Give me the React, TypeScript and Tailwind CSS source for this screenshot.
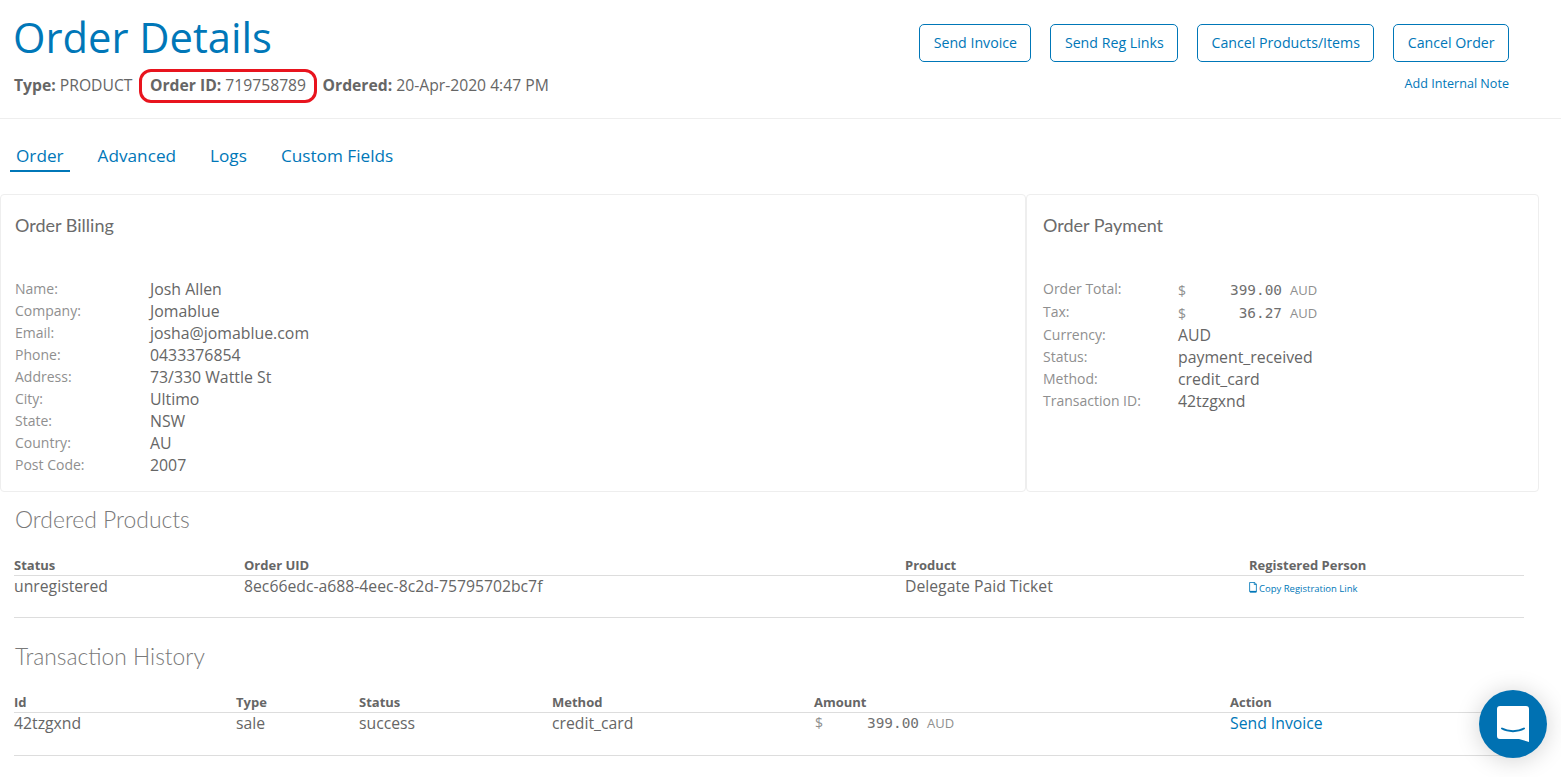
import React from 'react';

const BLUE = 'text-[#0077b8]';

const billing = [
  ['Name:', 'Josh Allen'],
  ['Company:', 'Jomablue'],
  ['Email:', 'josha@jomablue.com'],
  ['Phone:', '0433376854'],
  ['Address:', '73/330 Wattle St'],
  ['City:', 'Ultimo'],
  ['State:', 'NSW'],
  ['Country:', 'AU'],
  ['Post Code:', '2007'],
];

const payment = [
  ['Currency:', 'AUD'],
  ['Status:', 'payment_received'],
  ['Method:', 'credit_card'],
  ['Transaction ID:', '42tzgxnd'],
];

const Row = ({ label, value }: { label: string; value: string }) => (
  <div className="flex h-[22px] items-center">
    <div className="mb-[2px] w-[135px] text-[14px] text-[#8f8f8f]">{label}</div>
    <div className="mt-[2px] text-[15.85px] text-[#666]">{value}</div>
  </div>
);

const Money = ({ label, value }: { label: string; value: string }) => (
  <div className="flex h-[23px] items-center">
    <div className="mb-[2px] w-[135px] text-[14px] text-[#8f8f8f]">{label}</div>
    <div className="mt-[2px]">
      <Amount value={value} />
    </div>
  </div>
);

const Amount = ({ value }: { value: string }) => (
  <div className="flex items-center text-[13px] text-[#8f8f8f]">
    <span className="w-[9px] text-[14px]">$</span>
    <span className="w-[95px] text-right font-['DejaVu_Sans_Mono',monospace] text-[14.4px] text-[#707070]">{value}</span>
    <span className="ml-[8px]">AUD</span>
  </div>
);

const TableHead = ({ cols, labels }: { cols: string; labels: string[] }) => (
  <div className={`grid h-[20px] items-center border-b border-[#ddd] text-[13px] font-bold text-[#666] ${cols}`}>
    {labels.map(l => (
      <div key={l}>{l}</div>
    ))}
  </div>
);

const App: React.FC = () => {
  return (
    <div className="relative h-[777px] overflow-hidden bg-white font-['Open_Sans',sans-serif] text-[#666]">
      <header className="flex h-[119px] justify-between border-b border-[#eee] pl-[14px] pr-[52px]">
        <div>
          <h1 className={`mt-[10px] -ml-[1px] text-[41.7px] leading-[54px] ${BLUE}`}>Order Details</h1>
          <div className="mt-[5px] flex items-center text-[15.7px]">
            <span><b>Type:</b> PRODUCT</span>
            <span className="ml-[7px] rounded-[12px] border-[3px] border-[#e8141e] px-[7.5px] py-[2px]"><b>Order ID:</b> 719758789</span>
            <span className="ml-[6px]"><b>Ordered:</b> 20-Apr-2020 4:47 PM</span>
          </div>
        </div>
        <div className="flex flex-col items-end pt-[24px]">
          <div className="flex gap-[19px]">
            {['Send Invoice', 'Send Reg Links', 'Cancel Products/Items', 'Cancel Order'].map(b => (
              <button key={b} className={`h-[38px] rounded-[5px] border border-[#0077b8] px-[13.4px] text-[14.2px] ${BLUE}`}>{b}</button>
            ))}
          </div>
          <a className={`mt-[13px] text-[12.6px] leading-[18px] ${BLUE}`}>Add Internal Note</a>
        </div>
      </header>

      <nav className="flex gap-[22px] pl-[10px] pt-[24px]">
        {['Order', 'Advanced', 'Logs', 'Custom Fields'].map((t, i) => (
          <div key={t} className={`h-[29px] px-[6px] text-[17.2px] leading-[25px] ${BLUE} ${i === 0 ? 'border-b-2 border-[#0077b8]' : ''}`}>{t}</div>
        ))}
      </nav>

      <div className="mt-[22px] flex h-[298px] pr-[22px]">
        <section className="w-[1026px] rounded-[4px] border border-[#eee] pl-[14px]">
          <h2 className="mt-[18px] font-['Lato',sans-serif] text-[18px] leading-[24px] text-[#6b6b6b]">Order Billing</h2>
          <div className="mt-[41px]">
            {billing.map(([l, v]) => (
              <Row key={l} label={l} value={v} />
            ))}
          </div>
        </section>
        <section className="flex-1 rounded-[4px] border border-[#eee] pl-[16px]">
          <h2 className="mt-[18px] font-['Lato',sans-serif] text-[18px] leading-[24px] text-[#6b6b6b]">Order Payment</h2>
          <div className="mt-[41px]">
            <Money label="Order Total:" value="399.00" />
            <Money label="Tax:" value="36.27" />
            {payment.map(([l, v]) => (
              <Row key={l} label={l} value={v} />
            ))}
          </div>
        </section>
      </div>

      <div className="pl-[14px] pr-[37px]">
        <h3 className="mt-[13px] pl-[1px] font-['Lato',sans-serif] text-[22.9px] font-light leading-[28px] text-[#7a7a7a]">Ordered Products</h3>
        <div className="mt-[23px]">
          <TableHead cols="grid-cols-[230px_661px_344px_1fr]" labels={['Status', 'Order UID', 'Product', 'Registered Person']} />
          <div className="grid h-[42px] grid-cols-[230px_661px_344px_1fr] border-b border-[#ddd] text-[15.75px] leading-[20px]">
            <div>unregistered</div>
            <div>8ec66edc-a688-4eec-8c2d-75795702bc7f</div>
            <div>Delegate Paid Ticket</div>
            <a className={`flex items-center gap-[2px] self-start pt-[3px] text-[9.5px] ${BLUE}`}>
              <svg width="8" height="11" viewBox="0 0 9 13" fill="none" stroke="#0077b8" className="-mt-[3px]">
                <path d="M.5 11.5V.5h6l2 2v9z" />
                <path d="M6 .5v2.5h2.5" />
                <path d="M1 11.5h7.5" strokeWidth="2" />
              </svg>
              Copy Registration Link
            </a>
          </div>
        </div>

        <h3 className="mt-[24px] pl-[1px] font-['Lato',sans-serif] text-[22.8px] font-light leading-[28px] text-[#7a7a7a]">Transaction History</h3>
        <div className="mt-[23px]">
          <TableHead cols="grid-cols-[222px_123px_193px_262px_416px_1fr]" labels={['Id', 'Type', 'Status', 'Method', 'Amount', 'Action']} />
          <div className="grid h-[43px] grid-cols-[222px_123px_193px_262px_416px_1fr] border-b border-[#ddd] text-[15.75px] leading-[20px]">
            <div>42tzgxnd</div>
            <div>sale</div>
            <div>success</div>
            <div>credit_card</div>
            <div className="h-[22px] pl-[1px]"><Amount value="399.00" /></div>
            <a className={BLUE}>Send Invoice</a>
          </div>
        </div>
      </div>

      <div className="absolute left-[1479px] top-[690px] flex h-[68px] w-[68px] items-center justify-center rounded-full bg-[#0071b2] shadow-[0_2px_24px_rgba(0,0,0,0.18)]">
        <svg width="32" height="36" viewBox="0 0 32 36">
          <path d="M3 0h26a3 3 0 0 1 3 3v33l-10-3H3a3 3 0 0 1-3-3V3a3 3 0 0 1 3-3z" fill="#fff" />
          <path d="M5 22.5c6 3.5 16 3.5 22 0" fill="none" stroke="#0071b2" strokeWidth="2" strokeLinecap="round" />
        </svg>
      </div>
    </div>
  );
};

export default App;
